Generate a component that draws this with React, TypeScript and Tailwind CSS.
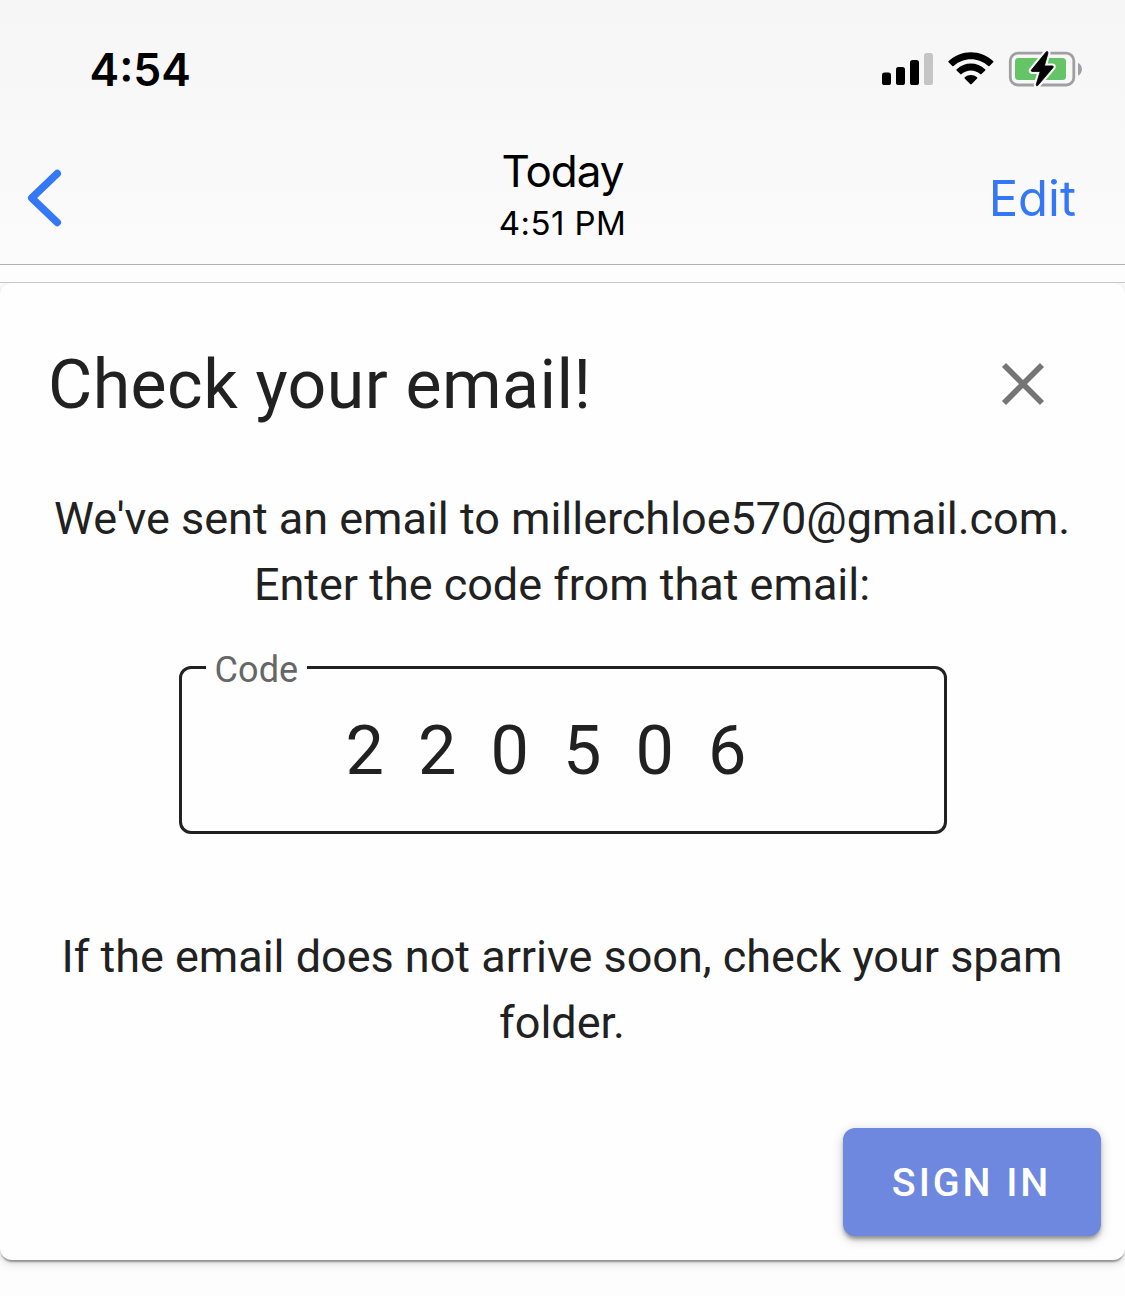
import React from "react";

function SignalIcon() {
  return (
    <svg width="52" height="34" viewBox="881 52 52 34" className="block">
      <rect x="882" y="72.5" width="9" height="12.5" rx="2.6" fill="#000" />
      <rect x="896" y="67" width="9" height="18" rx="2.6" fill="#000" />
      <rect x="910" y="60" width="9" height="25" rx="2.6" fill="#000" />
      <rect x="924" y="53" width="9" height="32" rx="2.6" fill="#c5c5c6" />
    </svg>
  );
}

function WifiIcon() {
  return (
    <svg width="47" height="34" viewBox="947 52 47 34" className="block" fill="#000">
      <path d="M948.6 62.3 Q948 61.7 948.7 61.1 C961.2 49.2 980.6 49.2 993.1 61.1 Q993.8 61.7 993.2 62.3 L989.5 66 Q988.9 66.6 988.2 66 C978.5 57 963.3 57 953.6 66 Q952.9 66.6 952.3 66 Z" />
      <path d="M956.6 70.4 Q956 69.8 956.7 69.2 C964.7 61.6 977.1 61.6 985.1 69.2 Q985.8 69.8 985.2 70.4 L981.5 74.1 Q980.9 74.7 980.2 74.1 C974.8 69.4 967 69.4 961.6 74.1 Q960.9 74.7 960.3 74.1 Z" />
      <path d="M964.7 78.5 Q964.1 77.9 964.8 77.3 C968.3 74.2 973.5 74.2 977 77.3 Q977.7 77.9 977.1 78.5 L971.7 84 Q970.9 84.8 970.1 84 Z" />
    </svg>
  );
}

function BatteryIcon() {
  const bolt = "M1046.3 51.8 L1031.4 70.1 Q1030.8 71.3 1032.1 71.5 L1040.2 71.5 L1036.2 84.6 Q1036.2 86.4 1037.7 85.6 L1053.1 67.5 Q1053.8 66 1052.4 65.9 L1044.4 65.9 L1048 53 Q1047.9 50.9 1046.3 51.8 Z";
  return (
    <svg width="75" height="42" viewBox="1008 48 75 42" className="block">
      <rect x="1010.3" y="53.2" width="63.5" height="31.8" rx="7.5" fill="none" stroke="#a09fa1" strokeWidth="2.8" />
      <rect x="1015" y="58" width="51" height="22" rx="3.5" fill="#65c466" />
      <path d="M1078 62.8 C1083.2 65.2 1083.2 73.4 1078 75.8 Z" fill="#a09fa1" />
      <path d={bolt} fill="#f7f7f7" stroke="#f7f7f7" strokeWidth="5" strokeLinejoin="round" />
      <path d={bolt} fill="#000" stroke="#000" strokeWidth="0.8" strokeLinejoin="round" />
    </svg>
  );
}

function StatusBar() {
  return (
    <div className="flex h-[140px] items-start justify-between pl-[89.5px] pr-[42px]">
      <span className="mt-[44px] text-[44.5px] font-semibold leading-[53px]">4:54</span>
      <div className="flex h-[42px] items-center mt-[48px]">
        <SignalIcon />
        <div className="ml-[14px]"><WifiIcon /></div>
        <div className="ml-[14px]"><BatteryIcon /></div>
      </div>
    </div>
  );
}

function NavBar() {
  return (
    <div className="grid grid-cols-3">
      <button className="justify-self-start pl-[26px] pt-[27px] self-start" aria-label="Back">
        <svg width="38" height="62" viewBox="0 0 38 62" className="block" fill="none" stroke="#3478f6" strokeWidth="7.4" strokeLinecap="round" strokeLinejoin="round">
          <path d="M31.3 6.5 L5.7 31 L31.3 55.5" />
        </svg>
      </button>
      <div className="flex flex-col items-center pt-[1px]">
        <span className="text-[44px] leading-[60px] tracking-[-1px]">Today</span>
        <span className="text-[33px] leading-[44px] tracking-[0.4px]">4:51 PM</span>
      </div>
      <button className="justify-self-end self-start pr-[49px] pt-[29px] text-[49px] leading-[60px] text-[#3478f6]">Edit</button>
    </div>
  );
}

export default function App() {
  return (
    <div className="flex h-[1296px] w-[1125px] flex-col overflow-hidden bg-[#fdfdfd] font-['Roboto',sans-serif] text-[#212121]">
      <header className="h-[265px] shrink-0 border-b border-[#b0b0b1] bg-linear-to-b from-[#f6f6f7] to-[#fbfbfc] font-['Inter',sans-serif] text-black">
        <StatusBar />
        <NavBar />
      </header>
      <div className="mt-[17px] shrink-0 border-t border-[#c6c6c6]">
        <main className="flex h-[977px] flex-col rounded-[12px] bg-[#fefefe] shadow-[0_3px_2px_-1px_rgba(0,0,0,0.36),0_3px_10px_rgba(0,0,0,0.16)] [clip-path:inset(0_-20px_-30px_-20px)]">
          <div className="flex items-start justify-between pl-[48px] pr-[80px] pt-[60px]">
            <h1 className="text-[68px] leading-[84px] tracking-[0.45px]">Check your email!</h1>
            <button aria-label="Close" className="mt-[19px]">
              <svg width="44" height="44" viewBox="0 0 44 44" className="block" stroke="#757575" strokeWidth="5.7">
                <path d="M3 3 L41 41 M41 3 L3 41" />
              </svg>
            </button>
          </div>
          <p className="mt-[59px] pr-[1px] text-center text-[45px] leading-[66px] tracking-[-0.02px]">
            We've sent an email to millerchloe570@gmail.com.<br />Enter the code from that email:
          </p>
          <fieldset className="mx-auto mt-[31px] flex h-[185px] w-[768px] flex-col rounded-[12px] border-[3px] border-[#212121]">
            <legend className="ml-[24px] h-[36px] px-[9px] text-[36px] leading-[42px] text-[#666666] tracking-[0.1px]">Code</legend>
            <div className="pl-[1px] pt-[24px] text-center text-[68.4px] leading-[84px] tracking-[34.1px]">220506</div>
          </fieldset>
          <p className="mt-[90px] pr-[1px] text-center text-[45px] leading-[66px] tracking-[-0.02px]">
            If the email does not arrive soon, check your spam<br />folder.
          </p>
          <button className="mb-[24px] mr-[24px] mt-auto flex h-[108px] w-[258px] items-center justify-center self-end rounded-[12px] bg-[#6d88de] pr-[1px] pt-[2px] text-[39.5px] font-medium tracking-[2.9px] text-white shadow-[0_4px_4px_-1px_rgba(0,0,0,0.35),0_3px_12px_rgba(0,0,0,0.2)]">
            SIGN IN
          </button>
        </main>
      </div>
    </div>
  );
}
